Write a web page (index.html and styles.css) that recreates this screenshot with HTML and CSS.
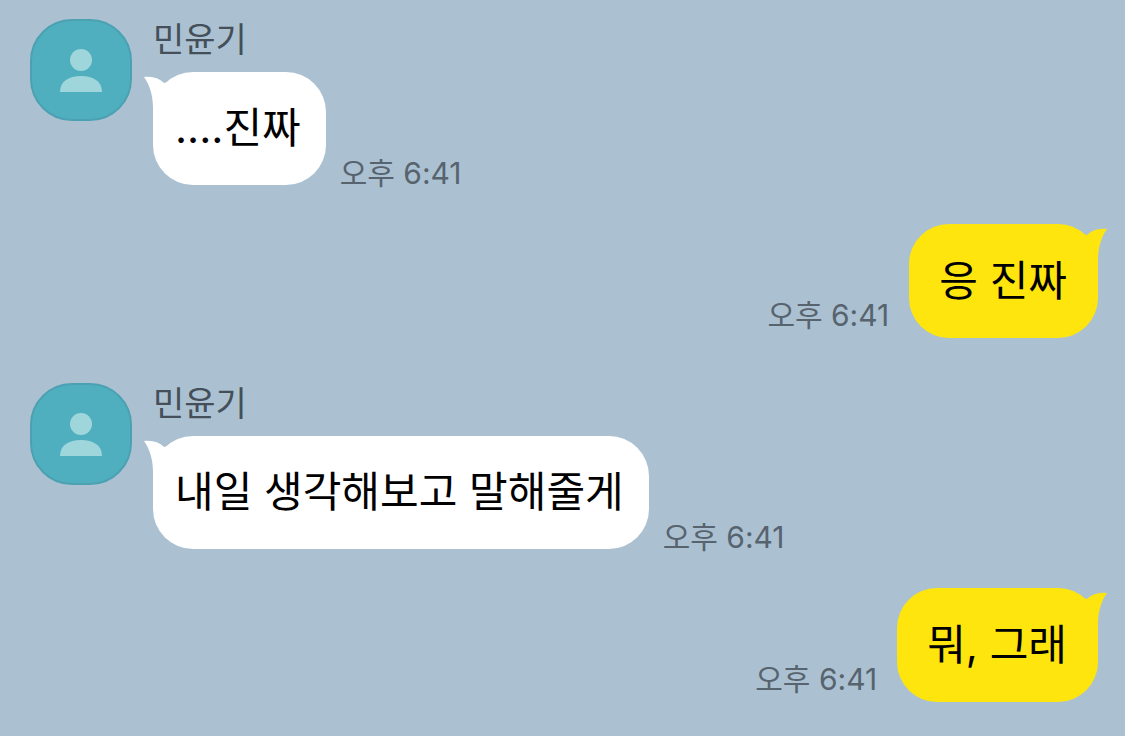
FILE: index.html
```html
<!DOCTYPE html>
<html lang="ko">
  <head>
    <meta charset="UTF-8" />
    <meta name="viewport" content="width=device-width, initial-scale=1.0" />
    <title>민윤기</title>
    <link rel="stylesheet" href="styles.css">
  </head>
  <body>
    <main class="chat">
      <section class="received">
        <svg class="avatar" viewBox="0 0 102 102" aria-hidden="true">
          <rect class="avatar-bg" x="1" y="1" width="100" height="100" rx="41" />
          <circle cx="51" cy="41" r="11" />
          <path d="M30 73C30 62 39 57 51 57S72 62 72 73Z" />
        </svg>
        <div class="content">
          <h2 class="name">민윤기</h2>
          <div class="row">
            <p class="bubble">
              <svg class="tail" viewBox="0 0 24 38" aria-hidden="true">
                <path d="M0 1C8 0 15 2 20 7L24 6V38H9V32C9 18 5 8 0 1Z" />
              </svg>
              ....진짜
            </p>
            <time class="time">오후 6:41</time>
          </div>
        </div>
      </section>

      <section class="sent">
        <time class="time">오후 6:41</time>
        <p class="bubble">
          <svg class="tail" viewBox="0 0 24 38" aria-hidden="true">
            <path d="M0 1C8 0 15 2 20 7L24 6V38H9V32C9 18 5 8 0 1Z" />
          </svg>
          응 진짜
        </p>
      </section>

      <section class="received">
        <svg class="avatar" viewBox="0 0 102 102" aria-hidden="true">
          <rect class="avatar-bg" x="1" y="1" width="100" height="100" rx="41" />
          <circle cx="51" cy="41" r="11" />
          <path d="M30 73C30 62 39 57 51 57S72 62 72 73Z" />
        </svg>
        <div class="content">
          <h2 class="name">민윤기</h2>
          <div class="row">
            <p class="bubble">
              <svg class="tail" viewBox="0 0 24 38" aria-hidden="true">
                <path d="M0 1C8 0 15 2 20 7L24 6V38H9V32C9 18 5 8 0 1Z" />
              </svg>
              내일 생각해보고 말해줄게
            </p>
            <time class="time">오후 6:41</time>
          </div>
        </div>
      </section>

      <section class="sent">
        <time class="time">오후 6:41</time>
        <p class="bubble">
          <svg class="tail" viewBox="0 0 24 38" aria-hidden="true">
            <path d="M0 1C8 0 15 2 20 7L24 6V38H9V32C9 18 5 8 0 1Z" />
          </svg>
          뭐, 그래
        </p>
      </section>
    </main>
  </body>
</html>
```

FILE: styles.css
```css
* {
  box-sizing: border-box;
}
body {
  margin: 0;
  background-color: #abc1d1;
  font-family: Inter, "Noto Sans CJK KR", sans-serif;
}
.chat {
  padding: 19px 27px 34px 30px;
}
.received {
  display: flex;
  align-items: flex-start;
  gap: 21px;
}
.avatar {
  flex: none;
  width: 102px;
  height: 102px;
  fill: #9fd6dc;
}
.avatar-bg {
  fill: #50afbf;
  stroke: #4ba1b1;
  stroke-width: 2px;
}
.name {
  margin: 0 0 11px;
  color: #444f59;
  font-size: 34px;
  font-weight: 400;
  line-height: 42px;
}
.row {
  display: flex;
  align-items: flex-end;
  gap: 14px;
}
.bubble {
  position: relative;
  margin: 0;
  padding: 30px 25px 31px 22px;
  border-radius: 40px;
  background-color: #fff;
  color: #000;
  font-size: 42px;
  line-height: 52px;
}
.tail {
  position: absolute;
  top: 4px;
  left: -9px;
  width: 24px;
  height: 38px;
  fill: #fff;
}
.time {
  flex: none;
  color: #57636e;
  font-size: 30px;
  line-height: 24px;
}
.sent {
  display: flex;
  justify-content: flex-end;
  align-items: flex-end;
  gap: 20px;
  margin: 39px 0 45px;
}
.sent:last-child {
  margin-bottom: 0;
}
.sent .bubble {
  padding: 31px 31px 31px 30px;
  background-color: #fee50d;
}
.sent .tail {
  right: -9px;
  left: auto;
  fill: #fee50d;
  transform: scaleX(-1);
}
.sent .time {
  margin-bottom: 11px;
}
```
